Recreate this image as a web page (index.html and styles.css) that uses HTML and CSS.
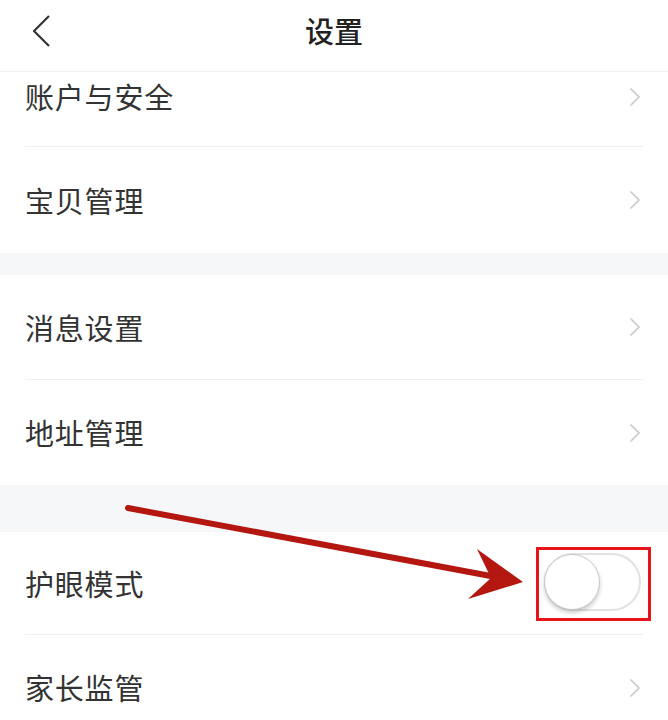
FILE: index.html
```html
<!DOCTYPE html>
<html lang="zh-CN">
<head>
<meta charset="utf-8">
<title>设置</title>
<link rel="stylesheet" href="styles.css">
</head>
<body>
<div class="page">
  <header class="topbar">
    <div class="back">
      <svg width="20" height="32" viewBox="0 0 20 32"><path d="M16 1 L1 16 L16 31" fill="none" stroke="#333" stroke-width="2.2" stroke-linejoin="miter"/></svg>
    </div>
    <h1 class="title">设置</h1>
    <div class="spacer"></div>
  </header>

  <section class="group">
    <div class="row row-cut"><span class="label">账户与安全</span><svg class="chev" width="12" height="20" viewBox="0 0 12 20"><path d="M1.5 1.5 L10 10 L1.5 18.5" fill="none" stroke="#c9c9c9" stroke-width="1.6"/></svg></div>
    <div class="row row-b"><span class="label">宝贝管理</span><svg class="chev" width="12" height="20" viewBox="0 0 12 20"><path d="M1.5 1.5 L10 10 L1.5 18.5" fill="none" stroke="#c9c9c9" stroke-width="1.6"/></svg></div>
  </section>
  <div class="band band-s"></div>
  <section class="group">
    <div class="row"><span class="label">消息设置</span><svg class="chev" width="12" height="20" viewBox="0 0 12 20"><path d="M1.5 1.5 L10 10 L1.5 18.5" fill="none" stroke="#c9c9c9" stroke-width="1.6"/></svg></div>
    <div class="row"><span class="label">地址管理</span><svg class="chev" width="12" height="20" viewBox="0 0 12 20"><path d="M1.5 1.5 L10 10 L1.5 18.5" fill="none" stroke="#c9c9c9" stroke-width="1.6"/></svg></div>
  </section>
  <div class="band band-l"></div>
  <section class="group">
    <div class="row row-eye"><span class="label">护眼模式</span>
      <span class="highlight"><span class="switch"><span class="knob"></span></span></span>
    </div>
    <div class="row"><span class="label">家长监管</span><svg class="chev" width="12" height="20" viewBox="0 0 12 20"><path d="M1.5 1.5 L10 10 L1.5 18.5" fill="none" stroke="#c9c9c9" stroke-width="1.6"/></svg></div>
  </section>

  <svg class="arrow" width="668" height="720" viewBox="0 0 668 720">
    <line x1="128" y1="508" x2="496" y2="577" stroke="#b3170f" stroke-width="6" stroke-linecap="round"/>
    <polygon points="477,549 523,582 468,599 491,578" fill="#b3170f"/>
  </svg>
</div>
</body>
</html>
```

FILE: styles.css
```css
* { box-sizing: border-box; }
html, body { margin: 0; padding: 0; background: #fff; }
body {
  font-family: "Noto Sans CJK SC", "Noto Sans", sans-serif;
  color: #333;
  overflow: hidden;
}
.page { position: relative; width: 668px; height: 720px; overflow: hidden; }

.topbar {
  height: 72px;
  border-bottom: 1px solid #f1f1f1;
  display: grid;
  grid-template-columns: 80px 1fr 80px;
  align-items: center;
  padding-bottom: 10px;
}
.back { padding-left: 33px; display: flex; align-items: center; }
.title {
  margin: 0;
  text-align: center;
  font-size: 29px;
  font-weight: 500;
  color: #222;
  line-height: 1;
}

.group { display: flex; flex-direction: column; }
.row {
  height: 105px;
  margin: 0 25px;
  display: flex;
  align-items: center;
  justify-content: space-between;
  border-bottom: 1px solid #efefef;
}
.row:last-child { border-bottom: none; }
.row-cut { height: 75px; padding-bottom: 25px; }
.row-b { height: 106px; }
.row-eye { height: 103px; }
.label { font-size: 29px; line-height: 1; color: #333; letter-spacing: 0.8px; }
.chev { margin-right: 2px; }

.band { background: #f6f7f9; }
.band-s { height: 22px; }
.band-l { height: 47px; }

.highlight {
  display: flex;
  border: 3px solid #e8141c;
  padding: 3px 7px 7px 5px;
  margin-right: -8px;
  margin-top: 1px;
}
.switch {
  width: 97px;
  height: 58px;
  border: 2px solid #e2e2e2;
  border-radius: 29px;
  background: #fff;
  display: flex;
  align-items: center;
}
.knob {
  width: 56px;
  height: 56px;
  margin-left: -2px;
  border-radius: 50%;
  background: #fff;
  border: 1.5px solid #c8c8c8;
  box-shadow: 0 3px 4px rgba(0,0,0,0.2);
}

.arrow { position: absolute; left: 0; top: 0; pointer-events: none; }
```
